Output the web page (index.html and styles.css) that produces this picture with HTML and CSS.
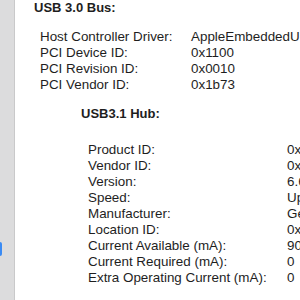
FILE: index.html
```html
<!DOCTYPE html>
<html lang="en">
<head>
    <meta charset="utf-8">
    <title>System Information</title>
    <link rel="stylesheet" href="styles.css">
</head>
<body>
    <div class="sidebar">
        <div class="selected"></div>
    </div>

    <div class="details">
        <h2 class="bus-title">USB 3.0 Bus:</h2>
        <dl class="props bus-props">
            <dt>Host Controller Driver:</dt><dd>AppleEmbeddedUSBXHCIFL1100</dd>
            <dt>PCI Device ID:</dt><dd>0x1100</dd>
            <dt>PCI Revision ID:</dt><dd>0x0010</dd>
            <dt>PCI Vendor ID:</dt><dd>0x1b73</dd>
        </dl>

        <h3 class="hub-title">USB3.1 Hub:</h3>
        <dl class="props hub-props">
            <dt>Product ID:</dt><dd>0x0620</dd>
            <dt>Vendor ID:</dt><dd>0x05e3</dd>
            <dt>Version:</dt><dd>6.63</dd>
            <dt>Speed:</dt><dd>Up to 10 Gb/s</dd>
            <dt>Manufacturer:</dt><dd>GenesysLogic</dd>
            <dt>Location ID:</dt><dd>0x01100000</dd>
            <dt>Current Available (mA):</dt><dd>900</dd>
            <dt>Current Required (mA):</dt><dd>0</dd>
            <dt>Extra Operating Current (mA):</dt><dd>0</dd>
        </dl>
    </div>
</body>
</html>
```

FILE: styles.css
```css
html, body {
    margin: 0;
    height: 100%;
    overflow: hidden;
}

body {
    display: flex;
    flex-direction: row;
    background: #ffffff;
    color: #1e1e1e;
    font-family: "Liberation Sans", Arial, sans-serif;
    font-size: 13.4px;
    line-height: 16px;
}

.sidebar {
    flex: 0 0 14px;
    background: #dcdcdd;
    border-right: 1px solid #c9c9ca;
}

/* selected row highlight peeking in from the left */
.selected {
    margin-top: 242px;
    width: 2px;
    height: 14px;
    background: #3a8bf4;
    border-radius: 0 3px 3px 0;
}

.details {
    flex: 1;
    min-width: 0;
    white-space: nowrap;
}

.bus-title {
    margin: 0 0 13px 19px;
    font-size: 13px;
    font-weight: bold;
}

.hub-title {
    margin: 13px 0 20px 66px;
    font-size: 13px;
    font-weight: bold;
}

.props {
    display: grid;
    margin: 0;
}

.props dt,
.props dd {
    margin: 0;
}

.bus-props {
    grid-template-columns: 151px auto;
    padding-left: 25px;
}

.hub-props {
    grid-template-columns: 199px auto;
    padding-left: 73px;
}
```
